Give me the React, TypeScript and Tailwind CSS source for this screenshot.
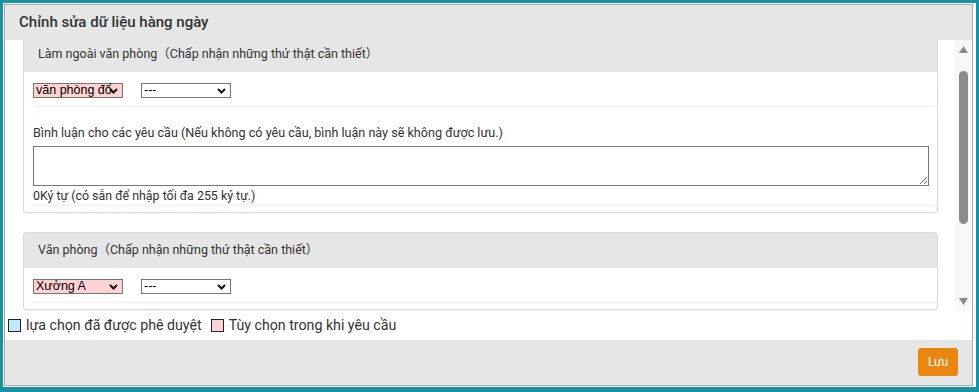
import { useLayoutEffect, useRef } from "react";

function Chevron() {
  return (
    <svg width="9" height="6" viewBox="0 0 9 6" className="shrink-0">
      <path d="M1 1 L4.5 4.5 L8 1" fill="none" stroke="#111" strokeWidth="2" />
    </svg>
  );
}

function FakeSelect({ label, pink }: { label: string; pink?: boolean }) {
  return (
    <div
      className={`flex h-[15px] w-[90px] items-center justify-between border border-[#767676] pl-[2px] pr-[4px] font-['Liberation_Sans',Arial,sans-serif] text-[12.5px] leading-none text-black ${
        pink ? "bg-[#ffd3d3]" : "bg-white"
      }`}
    >
      <span className="min-w-0 whitespace-nowrap">{label}</span>
      <Chevron />
    </div>
  );
}

function SelectRow({ first }: { first: string }) {
  return (
    <div className="flex h-[25px] items-start gap-[18px] pt-[3px] shadow-[0_2px_3px_rgba(0,0,0,0.05)]">
      <FakeSelect label={first} pink />
      <FakeSelect label="---" />
    </div>
  );
}

function Card({
  title,
  first,
  withComment,
}: {
  title: string;
  first: string;
  withComment?: boolean;
}) {
  return (
    <div className="rounded-[3px] border border-[#d6dce2] bg-white shadow-[0_1px_2px_rgba(0,0,0,0.06)]">
      <div className="flex h-[35px] items-center bg-[#e6e6e6] pl-[14px] text-[12.5px] text-[#333]">
        {title}
      </div>
      <div className="flex flex-col gap-[10px] pb-2 pl-[9px] pt-2">
        <SelectRow first={first} />
        {withComment && (
          <div className="flex h-[89px] flex-col pr-2 pt-[10px] shadow-[0_2px_3px_rgba(0,0,0,0.05)]">
            <div className="text-[12.6px] leading-[15px] text-[#333]">
              Bình luận cho các yêu cầu (Nếu không có yêu cầu, bình luận này sẽ không được lưu.)
            </div>
            <textarea className="mt-[6px] h-[40px] w-full resize border border-[#767676] bg-white outline-none" />
            <div className="mt-[2px] text-[12.4px] leading-[15px] text-[#333]">
              0Ký tự (có sẵn để nhập tối đa 255 ký tự.)
            </div>
          </div>
        )}
      </div>
    </div>
  );
}

export default function App() {
  const scrollRef = useRef<HTMLDivElement>(null);

  useLayoutEffect(() => {
    if (scrollRef.current) scrollRef.current.scrollTop = 14;
  }, []);

  return (
    <div className="h-[392px] w-[979px] bg-[#1793a2] pb-[5px] pl-[3px] pr-[3px] pt-[3px] font-['Roboto','Noto_Sans','Noto_Sans_CJK_JP',sans-serif]">
      <div className="h-full w-full bg-white pb-px pl-px pr-[3px] pt-px">
        <div className="flex h-full flex-col border border-[#a9a9a9]">
          <div className="flex h-[35px] shrink-0 items-center bg-[#e6e6e6] pl-[14px] text-[15px] font-medium text-[#333]">
            Chỉnh sửa dữ liệu hàng ngày
          </div>

          <div className="flex h-[271px] shrink-0 bg-white">
            <div ref={scrollRef} className="flex-1 overflow-hidden pl-[18px] pr-[17px]">
              <div className="flex flex-col gap-[19px] pb-6 pt-[10px]">
                <Card
                  title="Làm ngoài văn phòng（Chấp nhận những thứ thật cần thiết）"
                  first="văn phòng đổ"
                  withComment
                />
                <Card
                  title="Văn phòng（Chấp nhận những thứ thật cần thiết）"
                  first="Xưởng A"
                />
              </div>
            </div>
            <div className="flex w-[17px] shrink-0 flex-col items-center bg-[#f8f8f8] py-[6px]">
              <svg width="9" height="7" viewBox="0 0 9 7">
                <path d="M0 7 L4.5 0 L9 7 Z" fill="#8a8a8a" />
              </svg>
              <div className="mt-[18px] h-[153px] w-[9px] rounded-full bg-[#8c8c8c]" />
              <div className="flex-1" />
              <svg width="9" height="7" viewBox="0 0 9 7">
                <path d="M0 0 L4.5 7 L9 0 Z" fill="#8a8a8a" />
              </svg>
            </div>
          </div>

          <div className="flex h-[29px] shrink-0 items-center gap-[6px] bg-white pl-[3px] text-[14.2px] text-[#333]">
            <span className="flex items-center gap-[5px]">
              <span className="h-[13px] w-[13px] border border-[#222] bg-[#bfeafc]" />
              lựa chọn đã được phê duyệt
            </span>
            <span className="flex items-center gap-[5px] pl-[3px]">
              <span className="h-[13px] w-[13px] border border-[#222] bg-[#ffd3d3]" />
              Tùy chọn trong khi yêu cầu
            </span>
          </div>

          <div className="flex flex-1 items-start justify-end bg-[#e6e6e6] pr-[14px] pt-[8px]">
            <button className="h-[28px] w-[40px] rounded-[3px] bg-[#ea860f] text-[12px] text-white">
              Lưu
            </button>
          </div>
        </div>
      </div>
    </div>
  );
}
